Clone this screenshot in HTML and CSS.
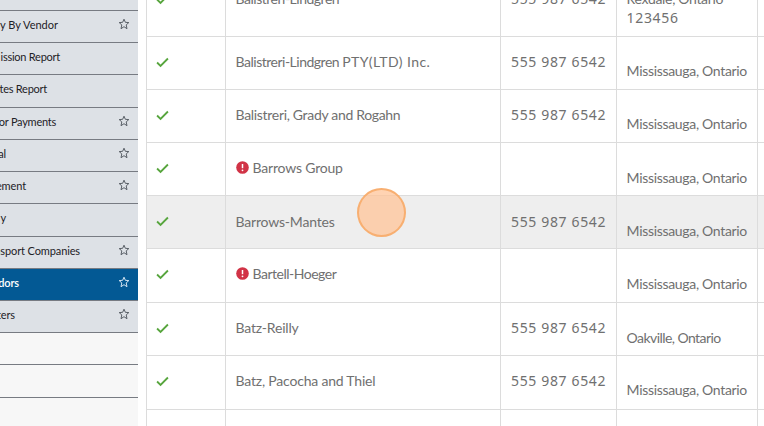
FILE: index.html
```html
<!DOCTYPE html>
<html lang="en">
<head>
<meta charset="utf-8">
<title>Vendors</title>
<link rel="stylesheet" href="styles.css">
</head>
<body>
<svg class="symbols" aria-hidden="true">
  <symbol id="star" viewBox="0 0 12 12"><path d="M6 1.2 7.35 4.3 10.8 4.6 8.2 6.9 9 10.7 6 8.7 3 10.7 3.8 6.9 1.2 4.6 4.65 4.3Z" fill="none" stroke="currentColor" stroke-width=".9" stroke-linejoin="round"/></symbol>
  <symbol id="check" viewBox="0 0 12 10"><path d="M1 5 4.2 8.1 11 1.3" fill="none" stroke="currentColor" stroke-width="1.7"/></symbol>
  <symbol id="alert" viewBox="0 0 13 13"><circle cx="6.5" cy="6.5" r="6.3" fill="#d13346"/><path d="M6.5 3v4.2" stroke="#fff" stroke-width="1.5"/><circle cx="6.5" cy="9.3" r=".9" fill="#fff"/></symbol>
</svg>
<div class="app">
  <nav class="sidebar">
    <div class="item"></div>
    <div class="item"><span>y By Vendor</span><svg><use href="#star"/></svg></div>
    <div class="item"><span>ission Report</span></div>
    <div class="item"><span>tes Report</span></div>
    <div class="item"><span>or Payments</span><svg><use href="#star"/></svg></div>
    <div class="item"><span>al</span><svg><use href="#star"/></svg></div>
    <div class="item"><span>ement</span><svg><use href="#star"/></svg></div>
    <div class="item"><span>y</span></div>
    <div class="item"><span>nsport Companies</span><svg><use href="#star"/></svg></div>
    <div class="item active"><span>dors</span><svg><use href="#star"/></svg></div>
    <div class="item"><span>ters</span><svg><use href="#star"/></svg></div>
    <div class="item empty"></div>
    <div class="item empty"></div>
    <div class="item empty"></div>
  </nav>
  <main class="table">
    <div class="row tall"><div class="status"><svg><use href="#check"/></svg></div><div class="name tighter"><span>Balistreri-Lindgren</span></div><div class="phone">555 987 6542</div><div class="place tight">Rexdale, Ontario<br><span class="num">123456</span></div><div></div></div>
    <div class="row"><div class="status"><svg><use href="#check"/></svg></div><div class="name tighter"><span>Balistreri-Lindgren <span class="wide">PTY(LTD) Inc.</span></span></div><div class="phone">555 987 6542</div><div class="place">Mississauga, Ontario</div><div></div></div>
    <div class="row"><div class="status"><svg><use href="#check"/></svg></div><div class="name tight"><span>Balistreri, Grady and Rogahn</span></div><div class="phone">555 987 6542</div><div class="place">Mississauga, Ontario</div><div></div></div>
    <div class="row low"><div class="status"><svg><use href="#check"/></svg></div><div class="name"><svg><use href="#alert"/></svg><span>Barrows Group</span></div><div class="phone"></div><div class="place">Mississauga, Ontario</div><div></div></div>
    <div class="row hover"><div class="status"><svg><use href="#check"/></svg></div><div class="name"><span>Barrows-Mantes</span></div><div class="phone">555 987 6542</div><div class="place">Mississauga, Ontario</div><div></div></div>
    <div class="row low"><div class="status"><svg><use href="#check"/></svg></div><div class="name tighter"><svg><use href="#alert"/></svg><span>Bartell-Hoeger</span></div><div class="phone"></div><div class="place">Mississauga, Ontario</div><div></div></div>
    <div class="row"><div class="status"><svg><use href="#check"/></svg></div><div class="name"><span>Batz-Reilly</span></div><div class="phone">555 987 6542</div><div class="place tighter">Oakville, Ontario</div><div></div></div>
    <div class="row"><div class="status"><svg><use href="#check"/></svg></div><div class="name"><span>Batz, Pacocha and Thiel</span></div><div class="phone">555 987 6542</div><div class="place">Mississauga, Ontario</div><div></div></div>
    <div class="row"><div></div><div></div><div></div><div></div><div></div></div>
  </main>
</div>
<div class="pointer"></div>
</body>
</html>
```
FILE: styles.css
```css
* { box-sizing: border-box; }
body { margin: 0; background: #fff; overflow: hidden; }
.symbols { position: absolute; width: 0; height: 0; }
.app { display: flex; height: 426px; overflow: hidden; }

.sidebar {
  width: 138px;
  flex: none;
  display: grid;
  grid-template-rows: 11px 32px 32px 33px 32px 32px 32px 33px 32px 32px 32px 32px 33px 32px;
  font: 11px/14px Lato, sans-serif;
  letter-spacing: -.12px;
  color: #1e2227;
}
.item {
  display: flex;
  justify-content: space-between;
  padding: 7px 8px 0 0;
  background: #dde1e6;
  border-bottom: 1px solid #777b82;
  white-space: nowrap;
  overflow: hidden;
}
/* Labels run out to the left; each one is anchored by its right end. */
.item span { display: flex; justify-content: flex-end; width: 19px; }
.item:nth-child(2) span { width: 58px; letter-spacing: 0; }
.item:nth-child(3) span { width: 60px; letter-spacing: -.25px; }
.item:nth-child(4) span { width: 47px; letter-spacing: -.25px; }
.item:nth-child(5) span { width: 56px; letter-spacing: -.25px; }
.item:nth-child(6) span { width: 6px; }
.item:nth-child(7) span { width: 26px; }
.item:nth-child(8) span { width: 6px; }
.item:nth-child(9) span { width: 80px; }
.item:nth-child(11) span { width: 15px; }
.item svg { width: 12px; height: 12px; color: #4b5159; flex: none; }
.item.active { background: #035994; color: #fff; font-weight: 600; }
.item.active svg { color: #e8f2fa; }
.item.empty { background: #f7f7f7; }

.table {
  flex: 1;
  margin-left: 8px;
  border-left: 1px solid #dcdcdc;
  display: grid;
  grid-template-rows: 37px 53px 53px 53px 53px 54px 53px 54px 53px;
  font: 14px/19px Lato, sans-serif;
  color: #707070;
}
.row { display: grid; grid-template-columns: 79px 275px 116px 141px 1fr; }
.row > div {
  border-right: 1px solid #dcdcdc;
  border-bottom: 1px solid #dcdcdc;
  white-space: nowrap;
  min-width: 0;
}
.row > div:last-child { border-right: 0; }
.row.hover { background: #eee; }
.status { padding: 20px 0 0 9px; }
.status svg { display: block; width: 13px; height: 11px; color: #57a53d; }
.name { display: flex; gap: 4px; padding: 15px 0 0 9.6px; letter-spacing: -.2px; }
.name svg { width: 13px; height: 13px; margin-top: 3px; }
.phone { padding: 15px 0 0 10px; font-family: "Noto Sans", sans-serif; letter-spacing: .65px; }
.place { padding: 24px 0 0 9.6px; letter-spacing: -.32px; }
.num { font-family: "Noto Sans", sans-serif; letter-spacing: .65px; }
.tight { letter-spacing: -.32px; }
.tighter { letter-spacing: -.5px; }
.place.tighter { letter-spacing: -.56px; }
.wide { letter-spacing: .42px; }
.row.hover .name, .row.hover .phone { padding-top: 16px; }
.row.hover .place, .row.low .place, .row:nth-child(7) .place { padding-top: 25px; }
.row.tall > div { height: 63px; margin-top: -26px; }
.row.tall .place { padding-top: 15px; }

.pointer {
  position: absolute;
  left: 357px;
  top: 188px;
  width: 49px;
  height: 49px;
  border: 2px solid rgba(246, 166, 96, .8);
  border-radius: 50%;
  background: rgba(255, 196, 152, .75);
}
```
